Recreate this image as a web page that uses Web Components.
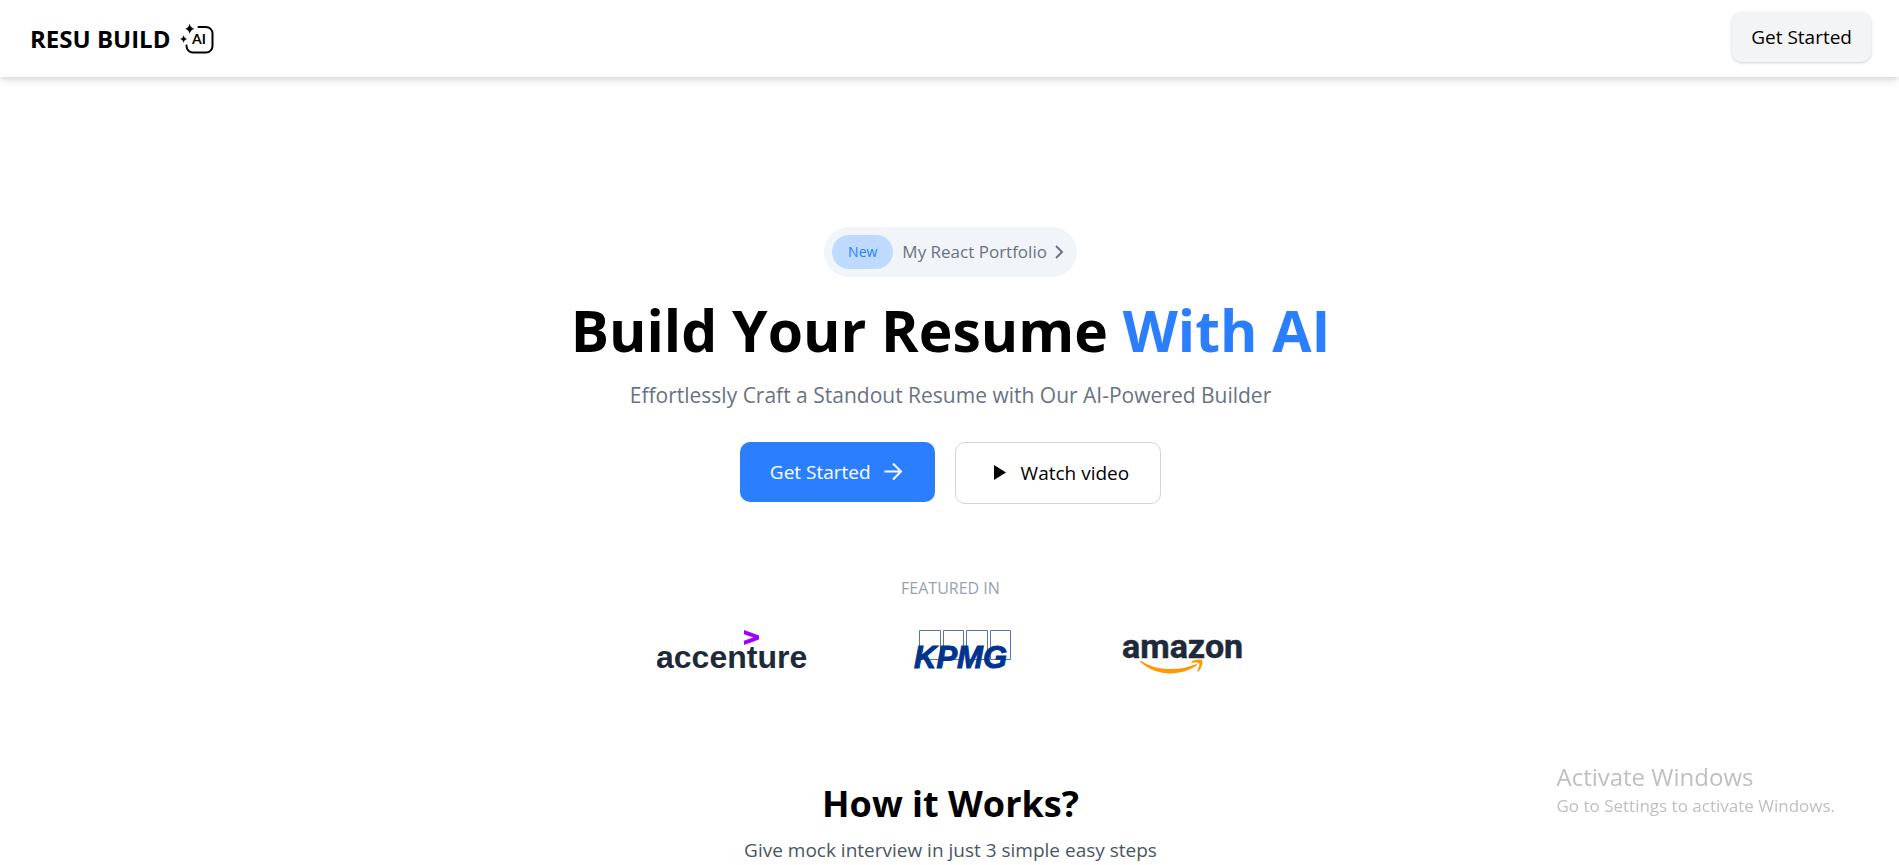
<!DOCTYPE html>
<html lang="en">
<head>
<meta charset="utf-8">
<meta name="viewport" content="width=device-width, initial-scale=1">
<title>Resu Build</title>
<style>
  body { margin: 0; background: #fff; color: #000; font-family: "Open Sans", "Noto Sans", sans-serif; }
</style>
</head>
<body>
<resu-app></resu-app>

<template id="t-app">
  <style>
    :host { display: block; }
    main { display: flex; flex-direction: column; align-items: center; padding-left: 2px; text-align: center; }
  </style>
  <site-header>RESU BUILD</site-header>
  <main>
    <hero-section></hero-section>
    <featured-logos></featured-logos>
    <how-section></how-section>
  </main>
  <system-notice>
    <span slot="title">Activate Windows</span>
    Go to Settings to activate Windows.
  </system-notice>
</template>

<template id="t-header">
  <style>
    :host { display: block; }
    header {
      display: flex; justify-content: space-between; align-items: center;
      box-sizing: border-box; min-height: 77px; padding: 12px 28px;
      box-shadow: 0 5px 8px -1px rgba(0,0,0,.1), 0 3px 5px -2px rgba(0,0,0,.1);
    }
    .brand { display: flex; align-items: center; gap: 9px; padding-left: 2px; font-size: 24px; line-height: 36px; font-weight: 700; color: inherit; text-decoration: none; }
    svg { display: block; }
    app-button { align-self: flex-start; }
  </style>
  <header>
    <a class="brand" href="#"><slot></slot>
      <svg width="36" height="36" viewBox="0 0 36 36" role="img" aria-label="AI">
        <path d="M19.500 6H27a6.500 6.500 0 0 1 6.500 6.500V25a6.500 6.500 0 0 1-6.500 6.500H14A6.500 6.500 0 0 1 7.500 25V24.500" fill="none" stroke="#000" stroke-width="2" stroke-linecap="round"/>
        <path d="M10.700 2.500Q11.500 7 15.500 7.800Q11.500 8.600 10.700 13Q9.900 8.600 6 7.800Q9.900 7 10.700 2.500Z" fill="#000"/>
        <path d="M4.600 14Q5.200 17.400 8.300 18Q5.200 18.600 4.600 22Q4 18.600 1 18Q4 17.400 4.600 14Z" fill="#000"/>
        <text x="13" y="23" font-family="Lato, sans-serif" font-size="14" font-weight="700">AI</text>
      </svg>
    </a>
    <app-button variant="soft">Get Started</app-button>
  </header>
</template>

<template id="t-button">
  <style>
    :host { display: inline-flex; }
    button {
      display: inline-flex; align-items: center; justify-content: center; gap: 10px;
      height: 60px; padding: 0 30px; margin: 0; border: 0; border-radius: 10px;
      font-family: inherit; font-size: 19px; line-height: 28px; color: #fff; background: #2b7fff; cursor: pointer;
    }
    :host([variant="soft"]) button {
      height: 50px; padding: 0 19px; color: #000; background: #f3f4f6;
      box-shadow: 0 1px 4px rgba(0,0,0,.1), 0 1px 2px rgba(0,0,0,.1);
    }
    :host([variant="outline"]) button { height: 62px; padding: 0 31px; color: #000; background: #fff; border: 1px solid #d1d5dc; }
  </style>
  <button type="button"><slot name="before"></slot><slot></slot><slot name="after"></slot></button>
</template>

<template id="t-hero">
  <style>
    :host { display: flex; flex-direction: column; align-items: center; padding-top: 150px; }
    .pill { display: flex; align-items: center; box-sizing: border-box; height: 50px; padding: 8px; border-radius: 25px; background: #f1f5f9; color: #6a7282; font-size: 17px; line-height: 28px; text-decoration: none; }
    .badge { padding: 0 16px; margin-right: 9px; border-radius: 17px; background: #bedbff; color: #2b7fff; font-size: 14px; line-height: 34px; font-weight: 500; }
    .pill svg { margin-left: 2px; }
    svg { display: block; }
    h1 { margin: 23px 0 0; font-size: 57px; line-height: 60px; font-weight: 700; }
    h1 span { color: #2b7fff; }
    p { margin: 20px 0 0; font-size: 21px; line-height: 30px; color: #6a7282; }
    .actions { display: flex; align-items: flex-start; gap: 20px; margin-top: 32px; }
  </style>
  <a class="pill" href="#"><span class="badge">New</span>My React Portfolio
    <svg width="20" height="20" viewBox="0 0 20 20" aria-hidden="true"><path d="M7 4l6 6-6 6" fill="none" stroke="#6a7282" stroke-width="2"/></svg>
  </a>
  <h1>Build Your Resume <span>With AI</span></h1>
  <p>Effortlessly Craft a Standout Resume with Our AI-Powered Builder</p>
  <div class="actions">
    <app-button>Get Started
      <svg slot="after" width="24" height="24" viewBox="0 0 24 24" aria-hidden="true"><path d="M3.500 11.500H20M12 3.500l8 8-8 8" fill="none" stroke="#fff" stroke-width="2"/></svg>
    </app-button>
    <app-button variant="outline">
      <svg slot="before" width="24" height="24" viewBox="0 0 24 24" aria-hidden="true"><path d="M7 4v15l12-7.500z" fill="#000"/></svg>
      Watch video
    </app-button>
  </div>
</template>

<template id="t-logos">
  <style>
    :host { display: flex; flex-direction: column; align-items: center; margin-top: 72px; }
    .label { font-size: 16px; line-height: 24px; color: #99a1af; text-transform: uppercase; }
    .row { display: flex; align-items: flex-end; gap: 106px; margin-top: 24px; }
    svg { display: block; }
  </style>
  <span class="label">Featured in</span>
  <div class="row">
    <svg width="150" height="48" viewBox="0 0 150 48" role="img" aria-label="accenture">
      <text x="-1" y="40" font-family="Liberation Sans, sans-serif" font-size="32" font-weight="700" fill="#1e2939">accenture</text>
      <path d="M87 2v4.300L96.200 9.500 87 12.800V17l15-5.500V7.500z" fill="#a100ff"/>
    </svg>
    <svg width="100" height="48" viewBox="0 0 100 48" role="img" aria-label="KPMG">
      <path d="M6.500 2.500h21v29h-21zM30.500 2.500h20v29h-20zM53.500 2.500h21v29h-21zM77.500 2.500h20v29h-20z" fill="none" stroke="#5573b5"/>
      <text x="1" y="40" font-family="Liberation Sans, sans-serif" font-size="31" font-weight="700" font-style="italic" fill="#00338d" stroke="#00338d">KPMG</text>
    </svg>
    <svg width="126" height="52" viewBox="0 -4 126 52" role="img" aria-label="amazon">
      <text x="3" y="30" font-family="Roboto, sans-serif" font-size="34" font-weight="700" fill="#1e2939" stroke="#1e2939" stroke-width=".5">amazon</text>
      <path d="M21.500 32.500C36 43 60 43.500 76.500 36.200C77.800 35.700 78.500 36.800 77.300 37.800C61 49 35.500 48 21 33.500Z" fill="#f90"/>
      <path d="M72.500 33.600C75.500 31.500 81.500 31 83 32.200C84.400 33.600 82.500 40.500 79.500 43.400C78.700 44 78.200 43.600 78.600 42.700C79.600 40 81 36.200 80 35.200C79 34 75.500 34.500 73.500 34.700C72.300 34.800 72 34.200 72.500 33.600Z" fill="#f90"/>
    </svg>
  </div>
</template>

<template id="t-how">
  <style>
    :host { display: block; margin-top: 106px; }
    h2 { margin: 0; font-size: 36px; line-height: 44px; font-weight: 700; }
    p { margin: 10px 0 0; font-size: 19px; line-height: 28px; color: #4a5565; }
  </style>
  <h2>How it Works?</h2>
  <p>Give mock interview in just 3 simple easy steps</p>
</template>

<template id="t-notice">
  <style>
    :host { display: block; position: fixed; right: 64px; bottom: 47px; color: #bfbfbf; font-size: 17px; line-height: 24px; pointer-events: none; }
    .title { font-size: 24px; line-height: 32px; margin-bottom: 1px; }
  </style>
  <div class="title"><slot name="title"></slot></div>
  <div><slot></slot></div>
</template>

<script>
  const define = (name, templateId) => customElements.define(name, class extends HTMLElement {
    constructor() {
      super();
      this.attachShadow({ mode: 'open' })
        .append(document.getElementById(templateId).content.cloneNode(true));
    }
  });
  define('app-button', 't-button');
  define('site-header', 't-header');
  define('hero-section', 't-hero');
  define('featured-logos', 't-logos');
  define('how-section', 't-how');
  define('system-notice', 't-notice');
  define('resu-app', 't-app');
</script>
</body>
</html>
